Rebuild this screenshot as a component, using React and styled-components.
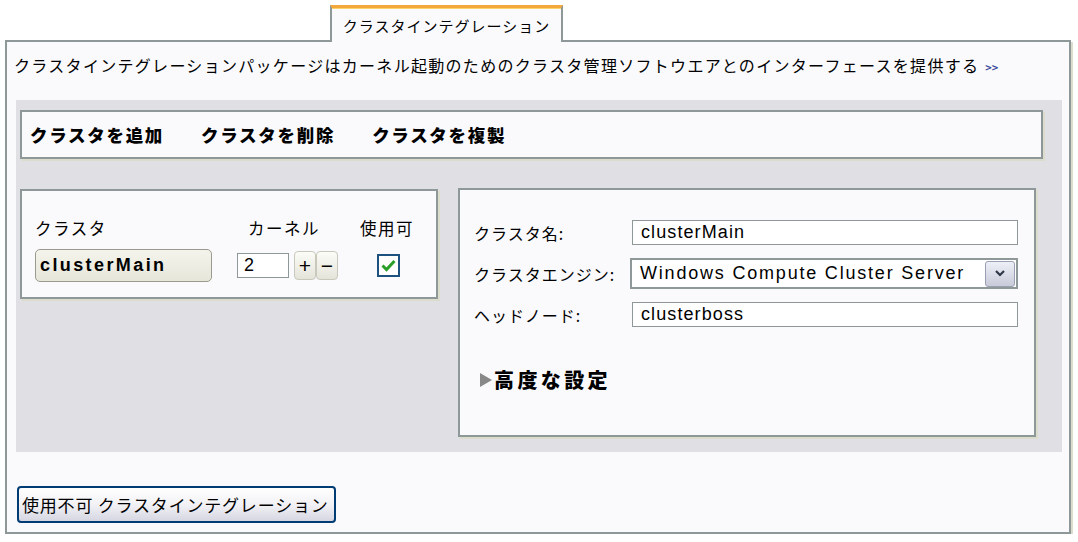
import React from "react";
import styled, { createGlobalStyle } from "styled-components";

const GlobalStyle = createGlobalStyle`
  body {
    margin: 0;
    background: #ffffff;
    font-family: "Noto Sans CJK JP", "Liberation Sans", sans-serif;
    color: #000;
  }
`;

const jp = `"Noto Sans CJK JP", "Liberation Sans", sans-serif`;
const latin = `"Liberation Sans", "DejaVu Sans", sans-serif`;

const Page = styled.div`
  padding: 5px 7px 0 5px;
  width: 1066px;
`;

const TabRow = styled.div`
  display: flex;
  padding-left: 325px;
  position: relative;
  z-index: 1;
`;

const Tab = styled.div`
  width: 229px;
  height: 34px;
  border-top: 3px solid #f2a83a;
  border-left: 2px solid #8f9898;
  border-right: 2px solid #8f9898;
  background: #fafafd;
  margin-bottom: -2px;
  display: flex;
  align-items: center;
  justify-content: center;
  font-size: 15px;
  letter-spacing: 1px;
  box-shadow: inset 0 1px 0 #fbd36a;
`;

const Panel = styled.div`
  border: 2px solid #8f9898;
  background: #fafafd;
  height: 490px;
  box-shadow: 2px 2px 0 #dcdccc;
  box-sizing: content-box;
  display: flex;
  flex-direction: column;
`;

const Description = styled.div`
  padding: 12px 0 0 7px;
  height: 46px;
  font-size: 16px;
  letter-spacing: 1.3px;
  line-height: 22px;
  white-space: nowrap;
`;

const More = styled.span`
  color: #3a4a9a;
  font-size: 11px;
  letter-spacing: 0;
  margin-left: 6px;
  font-weight: bold;
`;

const GreyArea = styled.div`
  margin: 0 7px 0 9px;
  height: 352px;
  background: #e0e0e4;
  padding: 10px 0 0 4px;
  box-sizing: border-box;
`;

const Toolbar = styled.div`
  width: 1023px;
  height: 49px;
  box-sizing: border-box;
  border: 2px solid #8f9898;
  background: #fafafd;
  box-shadow: 2px 2px 0 #dcdccc;
  display: flex;
  align-items: center;
  gap: 37px;
  padding-left: 8px;
`;

const ToolItem = styled.span`
  font-weight: 900;
  font-size: 17.5px;
  letter-spacing: 1.7px;
`;

const CardsRow = styled.div`
  display: flex;
  align-items: flex-start;
  gap: 20px;
  margin-top: 29px;
`;

const Card = styled.div`
  width: ${(p) => p.$w}px;
  height: ${(p) => p.$h}px;
  box-sizing: border-box;
  border: 2px solid #8f9898;
  background: #fafafd;
  box-shadow: 2px 2px 0 #dcdccc;
  margin-top: ${(p) => p.$top || 0}px;
`;

const ClusterGrid = styled.div`
  display: grid;
  grid-template-columns: 202px 118px 1fr;
  padding: 26px 0 0 11px;
  row-gap: 10px;
`;

const ColHead = styled.div`
  font-size: 16.5px;
  letter-spacing: 1.5px;
  line-height: 22px;
  padding-left: ${(p) => p.$pl || 0}px;
`;

const NameButton = styled.div`
  width: 177px;
  height: 33px;
  box-sizing: border-box;
  margin-left: 2px;
  border: 1px solid #9a9a8e;
  border-radius: 5px;
  background: linear-gradient(#f4f4ec, #e6e6da);
  font-family: ${latin};
  font-weight: bold;
  font-size: 18px;
  letter-spacing: 2.4px;
  display: flex;
  align-items: center;
  padding-left: 4px;
`;

const KernelCell = styled.div`
  display: flex;
  align-items: center;
  gap: 5px;
  padding-left: 2px;
`;

const SmallInput = styled.div`
  width: 52px;
  height: 25px;
  box-sizing: border-box;
  border: 1px solid #8f9898;
  background: #fff;
  font-family: ${latin};
  font-size: 18px;
  padding-left: 6px;
  line-height: 23px;
`;

const StepGroup = styled.div`
  display: flex;
`;

const StepButton = styled.div`
  width: 22px;
  height: 29px;
  box-sizing: border-box;
  border: 1px solid #c8c8bc;
  border-radius: 4px;
  background: linear-gradient(#fcfcf8, #e4e4da);
  display: flex;
  align-items: center;
  justify-content: center;
  font-family: ${latin};
  font-size: 21px;
`;

const CheckCell = styled.div`
  display: flex;
  align-items: center;
  padding-left: 24px;
`;

const CheckBox = styled.div`
  width: 23px;
  height: 23px;
  box-sizing: border-box;
  border: 2px solid #1c5180;
  background: #fff;
  display: flex;
  align-items: center;
  justify-content: center;
`;

const Form = styled.div`
  display: grid;
  grid-template-columns: 158px 388px;
  padding: 22px 0 0 14px;
  align-items: center;
`;

const Label = styled.div`
  font-size: 16px;
  letter-spacing: 1px;
  height: ${(p) => p.$h}px;
  display: flex;
  align-items: center;
`;

const TextField = styled.div`
  width: 386px;
  height: 25px;
  box-sizing: border-box;
  border: 1px solid #8f9898;
  background: #fff;
  font-family: ${latin};
  font-size: 18px;
  letter-spacing: 1.1px;
  padding-left: 8px;
  display: flex;
  align-items: center;
`;

const SelectField = styled.div`
  width: 388px;
  height: 31px;
  margin-left: -2px;
  box-sizing: border-box;
  border: 2px solid #8f9898;
  background: #fff;
  font-family: ${latin};
  font-size: 18px;
  letter-spacing: 1.8px;
  padding-left: 8px;
  display: flex;
  align-items: center;
  justify-content: space-between;
  white-space: nowrap;
`;

const DropButton = styled.div`
  width: 30px;
  height: 26px;
  box-sizing: border-box;
  margin-right: 1px;
  border: 1px solid #9aa0b4;
  border-radius: 3px;
  background: linear-gradient(#eef0f8, #c8cbd8);
  display: flex;
  align-items: center;
  justify-content: center;
`;

const Advanced = styled.div`
  display: flex;
  align-items: center;
  gap: 2px;
  margin: 30px 0 0 20px;
  font-weight: 900;
  font-size: 20px;
  letter-spacing: 3.4px;
`;

const Triangle = styled.span`
  width: 0;
  height: 0;
  border-top: 7px solid transparent;
  border-bottom: 7px solid transparent;
  border-left: 12px solid #888;
`;

const Footer = styled.div`
  padding: 34px 0 0 10px;
`;

const DisableButton = styled.button`
  width: 319px;
  height: 37px;
  border: 2px solid #003c74;
  border-radius: 4px;
  background: linear-gradient(#ffffff 0%, #f2f2f6 50%, #d6d6e2 100%);
  font-family: ${jp};
  font-size: 17px;
  letter-spacing: 0.8px;
  color: #000;
  padding: 0 0 0 3px;
  text-align: left;
`;

export default function App() {
  return (
    <Page>
      <GlobalStyle />
      <TabRow>
        <Tab>クラスタインテグレーション</Tab>
      </TabRow>
      <Panel>
        <Description>
          クラスタインテグレーションパッケージはカーネル起動のためのクラスタ管理ソフトウエアとのインターフェースを提供する
          <More>&gt;&gt;</More>
        </Description>
        <GreyArea>
          <Toolbar>
            <ToolItem>クラスタを追加</ToolItem>
            <ToolItem>クラスタを削除</ToolItem>
            <ToolItem>クラスタを複製</ToolItem>
          </Toolbar>
          <CardsRow>
            <Card $w={418} $h={110} $top={1}>
              <ClusterGrid>
                <ColHead $pl={2}>クラスタ</ColHead>
                <ColHead $pl={13}>カーネル</ColHead>
                <ColHead $pl={7}>使用可</ColHead>
                <NameButton>clusterMain</NameButton>
                <KernelCell>
                  <SmallInput>2</SmallInput>
                  <StepGroup>
                    <StepButton>+</StepButton>
                    <StepButton>−</StepButton>
                  </StepGroup>
                </KernelCell>
                <CheckCell>
                  <CheckBox>
                    <svg width="15" height="13" viewBox="0 0 15 13">
                      <path d="M1.5 6.5 L5.5 10.5 L13.5 2" fill="none" stroke="#2aa02a" strokeWidth="3" />
                    </svg>
                  </CheckBox>
                </CheckCell>
              </ClusterGrid>
            </Card>
            <Card $w={578} $h={249}>
              <Form>
                <Label $h={41}>クラスタ名:</Label>
                <TextField>clusterMain</TextField>
                <Label $h={41}>クラスタエンジン:</Label>
                <SelectField>
                  Windows Compute Cluster Server
                  <DropButton>
                    <svg width="10" height="8" viewBox="0 0 10 8">
                      <path d="M1 1 L5 5 L9 1" fill="none" stroke="#303848" strokeWidth="2.2" />
                    </svg>
                  </DropButton>
                </SelectField>
                <Label $h={41}>ヘッドノード:</Label>
                <TextField>clusterboss</TextField>
              </Form>
              <Advanced>
                <Triangle />
                高度な設定
              </Advanced>
            </Card>
          </CardsRow>
        </GreyArea>
        <Footer>
          <DisableButton>使用不可 クラスタインテグレーション</DisableButton>
        </Footer>
      </Panel>
    </Page>
  );
}
